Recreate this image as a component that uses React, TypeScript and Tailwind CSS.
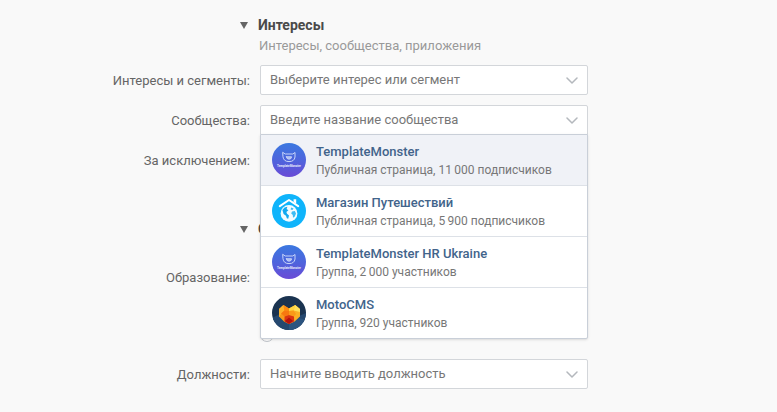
import { ReactNode, useState } from "react"
import clsx from "clsx"

type Community = {
    id: number
    name: string
    info: string
    logo: ReactNode
}

function MonsterLogo() {
    return (
        <svg viewBox="0 0 34 34" className="size-[34px] shrink-0" aria-hidden="true">
            <defs>
                <linearGradient id="monster" x1="0" y1="0" x2="0" y2="1">
                    <stop offset="0" stopColor="#3b78e0" />
                    <stop offset="0.55" stopColor="#5062dc" />
                    <stop offset="1" stopColor="#6a4bd6" />
                </linearGradient>
            </defs>
            <circle cx="17" cy="17" r="17" fill="url(#monster)" />
            <g fill="none" stroke="#c9d5f9" strokeWidth="1" strokeLinejoin="round" strokeLinecap="round">
                <path d="M11 9.5 L13.2 11 H20.8 L23 9.5 V14 Q22.4 18.6 17 18.6 Q11.6 18.6 11 14 Z" />
                <path d="M14.4 13.8 H19.6 Q19.4 16.2 17 16.2 Q14.6 16.2 14.4 13.8 Z" fill="#a9b9f2" />
            </g>
            <text x="17" y="24" textAnchor="middle" fill="#e8ebfc" className="font-['Roboto',sans-serif] text-[3px] font-bold">
                TemplateMonster
            </text>
        </svg>
    )
}

function TravelLogo() {
    return (
        <svg viewBox="0 0 34 34" className="size-[34px] shrink-0" aria-hidden="true">
            <circle cx="17" cy="17" r="17" fill="#0fb4fb" />
            <path d="M7.8 12.2 L17 6 L26.2 12.2" fill="none" stroke="#fff" strokeWidth="2" strokeLinecap="round" strokeLinejoin="round" />
            <path d="M21.6 5.2 H24.2 V9.8 L21.6 8 Z" fill="#fff" />
            <circle cx="17" cy="19.4" r="8.4" fill="#f2fbff" />
            <path d="M10.4 16 L12.6 13.4 L15.4 12.8 L14.6 15 L16.4 16.2 L14.4 18 L15 19.8 L17 21.4 L16.2 24.8 L14.8 24.2 L14 21.8 L11.6 20 Z" fill="#12a9f0" />
            <path d="M19.2 13.6 L21.6 14.6 L20.4 16 L18.6 15.4 Z M20 17.4 L22.8 17 L24 19.4 L22.8 22.6 L21 23.8 L20.8 21 L19.2 19.4 Z" fill="#3dbcf4" />
        </svg>
    )
}

function MotoLogo() {
    return (
        <svg viewBox="0 0 34 34" className="size-[34px] shrink-0" aria-hidden="true">
            <defs>
                <clipPath id="moto">
                    <circle cx="17" cy="17" r="17" />
                </clipPath>
            </defs>
            <g clipPath="url(#moto)">
                <rect width="34" height="34" fill="#1a3350" />
                <path d="M0 22 L8 18 L27 20 L34 17 V34 H0 Z" fill="#25486f" />
                <path d="M17 28 L23 21 L34 24 V34 H17 Z" fill="#2b547f" />
                <path d="M7 13 L11.4 9 L17 12.6 V28 L12 25.4 L7 20.6 Z" fill="#f79a1b" />
                <path d="M28 13 L23.2 9 L17 12.6 V28 L22.6 25.4 L28 20.6 Z" fill="#fbb024" />
                <path d="M7 13 L11.4 9 L12.4 14.6 L7 20.6 Z" fill="#fdb32a" />
                <path d="M11.4 9 L17 12.6 V15 L12.4 14.6 Z" fill="#fb8b12" />
                <path d="M17 12.6 L23.2 9 L21.6 14.6 L17 15 Z" fill="#fed43f" />
                <path d="M23.2 9 L28 13 V16 L21.6 14.6 Z" fill="#fee05a" />
                <path d="M12.4 14.6 L17 15 V19 L12.6 20.6 L9 17.6 Z" fill="#f7780f" />
                <path d="M17 15 L21.6 14.6 L24 18 L22 20.6 L17 19 Z" fill="#fa9a18" />
                <path d="M12.6 20.6 L17 19 L22 20.6 L22.2 25.4 L17 28 L12.4 25.4 Z" fill="#dc3410" />
                <path d="M17 21.4 L21 25 L17 28 L13 25 Z" fill="#b5120d" />
            </g>
        </svg>
    )
}

const communities: Community[] = [
    { id: 1, name: "TemplateMonster", info: "Публичная страница, 11\u2009000 подписчиков", logo: <MonsterLogo /> },
    { id: 2, name: "Магазин Путешествий", info: "Публичная страница, 5\u2009900 подписчиков", logo: <TravelLogo /> },
    { id: 3, name: "TemplateMonster HR Ukraine", info: "Группа, 2\u2009000 участников", logo: <MonsterLogo /> },
    { id: 4, name: "MotoCMS", info: "Группа, 920 участников", logo: <MotoLogo /> },
]

function Row({ label, htmlFor, children }: { label?: string, htmlFor?: string, children?: ReactNode }) {
    return (
        <div className="flex min-h-[30px]">
            <div className="flex w-1/3 shrink-0 justify-end pt-2 pr-[9px] text-[#656565]">
                {label && <label htmlFor={htmlFor}>{label}</label>}
            </div>
            <div className="relative ml-px w-full max-w-[328px]">{children}</div>
        </div>
    )
}

function SectionTitle({ title }: { title: string }) {
    return (
        <div className="flex h-5 items-center">
            <div className="flex w-1/3 shrink-0 justify-end pr-[11px]">
                <button type="button" aria-label="Свернуть раздел">
                    <svg viewBox="0 0 8 7" className="h-[7px] w-2" aria-hidden="true">
                        <path d="M0 0 H8 L4 7 Z" fill="#656565" />
                    </svg>
                </button>
            </div>
            <h2 className="-ml-px text-sm font-bold text-[#4a4a4a]">{title}</h2>
        </div>
    )
}

function Combobox({ id, placeholder, open, onToggle }: { id: string, placeholder: string, open?: boolean, onToggle?: () => void }) {
    return (
        <div className={clsx("flex h-[30px] items-center border border-[#d3d6da] bg-white", open ? "rounded-t-xs" : "rounded-xs")}>
            <input
                id={id}
                type="text"
                placeholder={placeholder}
                className="h-full min-w-0 grow bg-transparent pb-0.5 pl-[9px] outline-none placeholder:text-[#777777]"
            />
            <button type="button" aria-label="Открыть список" onClick={onToggle} className="flex h-full w-[30px] items-center justify-center">
                <svg viewBox="0 0 12 7" className="h-[7px] w-3" aria-hidden="true">
                    <path d="M1 1 L6 6 L11 1" fill="none" stroke="#b4b8bd" strokeWidth="1.5" strokeLinecap="round" strokeLinejoin="round" />
                </svg>
            </button>
        </div>
    )
}

export default function App() {
    const [open, setOpen] = useState(true)
    const [active, setActive] = useState(1)

    return (
        <main className="min-h-screen bg-[#f9f9f9] pt-[15px] pb-5 font-['Roboto','Noto_Sans',sans-serif] text-[13px] leading-4">
            <SectionTitle title="Интересы" />
            <Row>
                <p className="-ml-px pt-[3px] text-[#999999]">Интересы, сообщества, приложения</p>
            </Row>

            <div className="flex flex-col gap-2.5">
                <Row label="Интересы и сегменты:" htmlFor="interests">
                    <Combobox id="interests" placeholder="Выберите интерес или сегмент" />
                </Row>
                <Row label="Сообщества:" htmlFor="communities">
                    <Combobox id="communities" placeholder="Введите название сообщества" open={open} onToggle={() => setOpen(!open)} />
                    {open && (
                        <ul className="absolute inset-x-0 top-full z-10 -mt-px divide-y divide-[#dde1e7] rounded-b-xs border border-[#c9cfd8] bg-white shadow-sm">
                            {communities.map((item) => (
                                <li key={item.id}>
                                    <button
                                        type="button"
                                        onMouseEnter={() => setActive(item.id)}
                                        className={clsx("flex h-[50px] w-full items-center gap-2.5 pl-[11px] text-left", active === item.id && "bg-[#f0f2f7]")}
                                    >
                                        {item.logo}
                                        <span className="flex flex-col gap-0.5 pt-0.5">
                                            <span className="font-medium text-[#42648b]">{item.name}</span>
                                            <span className="text-xs leading-4 text-[#777777]">{item.info}</span>
                                        </span>
                                    </button>
                                </li>
                            ))}
                        </ul>
                    )}
                </Row>
                <Row label="За исключением:" />
            </div>

            <div className="mt-11">
                <SectionTitle title="О" />
            </div>
            <div className="mt-[23px] flex flex-col gap-[17px]">
                <Row label="Образование:" htmlFor="education">
                    <div className="flex h-20 items-end">
                        <input
                            id="education"
                            type="radio"
                            name="education"
                            className="size-3.5 appearance-none rounded-full border border-[#c0c4ca] bg-white"
                        />
                    </div>
                </Row>
                <Row label="Должности:" htmlFor="positions">
                    <Combobox id="positions" placeholder="Начните вводить должность" />
                </Row>
            </div>
        </main>
    )
}
